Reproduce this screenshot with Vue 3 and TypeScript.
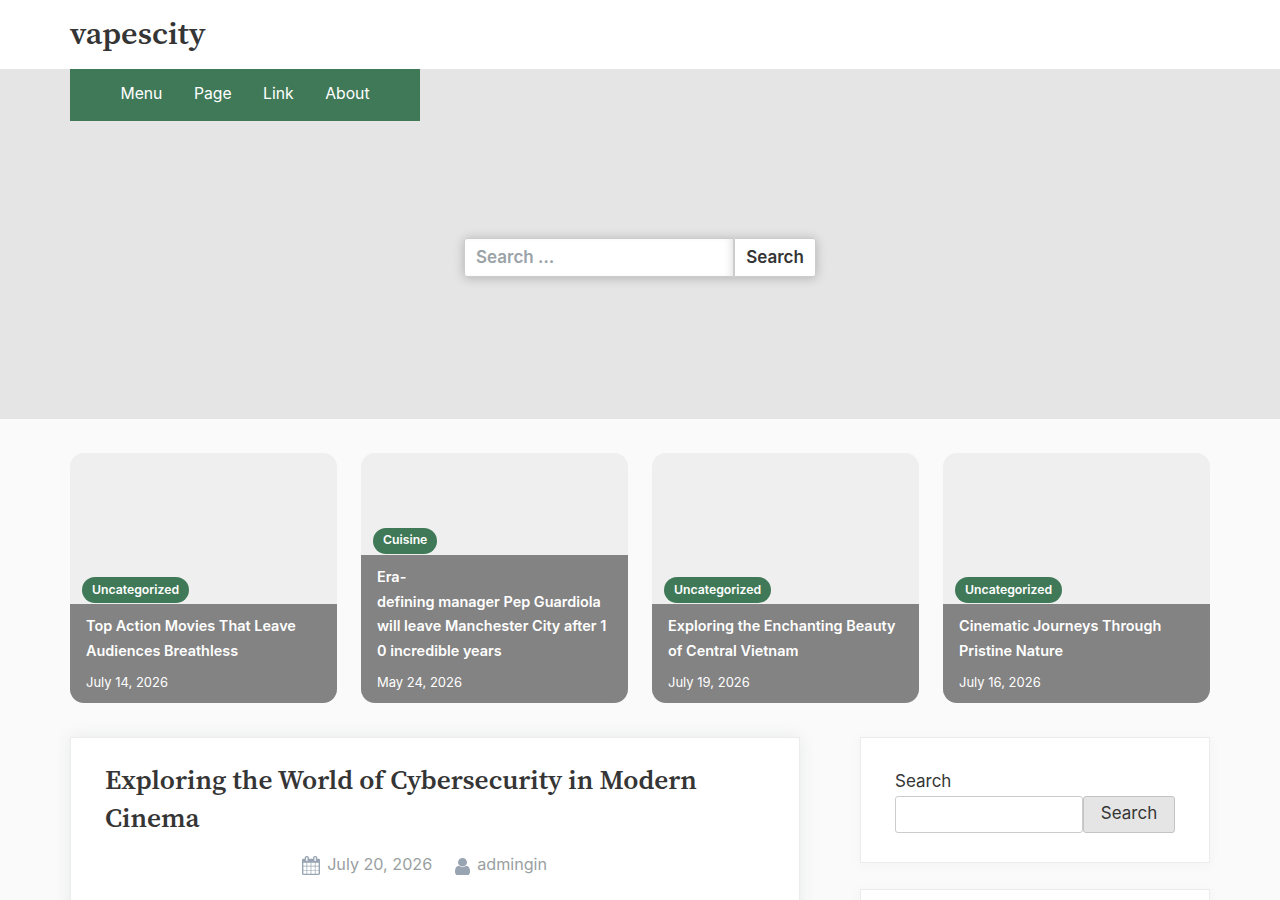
<script setup lang="ts">
interface Post {
  category: string
  lines: string[]
  date: string
}

const menu: string[] = ['Menu', 'Page', 'Link', 'About']

const posts: Post[] = [
  { category: 'Uncategorized', lines: ['Top Action Movies That Leave', 'Audiences Breathless'], date: 'July 14, 2026' },
  {
    category: 'Cuisine',
    lines: ['Era-', 'defining manager Pep Guardiola', 'will leave Manchester City after 1', '0 incredible years'],
    date: 'May 24, 2026',
  },
  { category: 'Uncategorized', lines: ['Exploring the Enchanting Beauty', 'of Central Vietnam'], date: 'July 19, 2026' },
  { category: 'Uncategorized', lines: ['Cinematic Journeys Through', 'Pristine Nature'], date: 'July 16, 2026' },
]
</script>

<template>
  <div class="page">
    <header class="site-header">
      <div class="wrap"><a class="brand">vapescity</a></div>
    </header>
    <section class="hero">
      <nav class="nav">
        <a v-for="item in menu" :key="item">{{ item }}</a>
      </nav>
      <form class="hero-search" @submit.prevent>
        <input type="text" placeholder="Search …" />
        <button type="submit">Search</button>
      </form>
    </section>

    <section class="cards">
      <article v-for="post in posts" :key="post.date" class="card">
        <span class="badge" :class="{ tall: post.lines.length > 2 }">{{ post.category }}</span>
        <div class="caption">
          <h3><span v-for="line in post.lines" :key="line">{{ line }}</span></h3>
          <time>{{ post.date }}</time>
        </div>
      </article>
    </section>

    <div class="columns">
      <main class="entry">
        <h2>Exploring the World of Cybersecurity in Modern<br />Cinema</h2>
        <div class="meta">
          <svg class="ico-cal" viewBox="64 0 1664 1792" preserveAspectRatio="none" aria-hidden="true">
            <path d="M192 1664h288v-288h-288v288zm352 0h320v-288h-320v288zm-352-352h288v-320h-288v320zm352 0h320v-320h-320v320zm-352-384h288v-288h-288v288zm736 736h320v-288h-320v288zm-384-736h320v-288h-320v288zm768 736h288v-288h-288v288zm-384-352h320v-320h-320v320zm-352-864v-288q0-13-9.5-22.5t-22.5-9.5h-64q-13 0-22.5 9.5t-9.5 22.5v288q0 13 9.5 22.5t22.5 9.5h64q13 0 22.5-9.5t9.5-22.5zm736 864h288v-320h-288v320zm-384-384h320v-288h-320v288zm384 0h288v-288h-288v288zm32-480v-288q0-13-9.5-22.5t-22.5-9.5h-64q-13 0-22.5 9.5t-9.5 22.5v288q0 13 9.5 22.5t22.5 9.5h64q13 0 22.5-9.5t9.5-22.5zm384-64v1280q0 52-38 90t-90 38h-1408q-52 0-90-38t-38-90v-1280q0-52 38-90t90-38h128v-96q0-66 47-113t113-47h64q66 0 113 47t47 113v96h384v-96q0-66 47-113t113-47h64q66 0 113 47t47 113v96h128q52 0 90 38t38 90z" />
          </svg>
          <span class="date">July 20, 2026</span>
          <svg class="ico-user" viewBox="256 128 1280 1536" preserveAspectRatio="none" aria-hidden="true">
            <path d="M1536 1399q0 109-62.5 187t-150.5 78h-854q-88 0-150.5-78t-62.5-187q0-85 8.500-160.500t31.500-152 58.500-131 94-89 134.500-34.500q131 128 313 128t313-128q76 0 134.500 34.500t94 89 58.500 131 31.500 152 8.500 160.500zm-256-887q0 159-112.500 271.500t-271.500 112.500-271.500-112.500-112.500-271.500 112.500-271.500 271.500-112.500 271.500 112.500 112.500 271.500z" />
          </svg>
          <span>admingin</span>
        </div>
      </main>
      <aside class="sidebar">
        <section class="widget">
          <label for="side-search">Search</label>
          <form class="side-form" @submit.prevent>
            <input id="side-search" type="text" />
            <button type="submit">Search</button>
          </form>
        </section>
        <section class="widget"></section>
      </aside>
    </div>
  </div>
</template>

<style>
html, body { margin: 0; overflow: hidden; }
</style>

<style scoped>
* { box-sizing: border-box; }
.page {
  height: 900px;
  overflow: hidden;
  background: #fafafa;
  color: #353535;
  font: 17px/27px Inter, sans-serif;
}
.site-header { height: 69px; background: #fff; }
.wrap { width: 1140px; margin: 0 auto; }
.brand {
  display: block;
  padding-top: 14px;
  font: 600 30px/40px "Source Serif 4", "Source Serif Pro", "Liberation Serif", serif;
  transform: scaleX(1.07);
  transform-origin: 0 0;
}
.hero { height: 350px; padding: 0 70px; background: #e5e5e5; }
.nav {
  display: flex;
  justify-content: center;
  gap: 31.5px;
  width: 350px;
  height: 52px;
  padding-top: 11px;
  background: #3f7958;
  color: #fff;
  font-size: 15.725px;
}
.hero-search {
  display: flex;
  width: 352px;
  height: 39px;
  margin: 117px auto 0;
  border-radius: 3px;
  box-shadow: 0 1px 11px rgba(0, 0, 0, 0.23);
}
input, button { margin: 0; font: inherit; color: inherit; outline: none; }
.hero-search input {
  width: 270px;
  padding: 0 11px;
  border: 1px solid #ccc;
  border-radius: 3px 0 0 3px;
  background: #fff;
  box-shadow: inset -6px 0 8px -5px rgba(0, 0, 0, 0.14);
  font-weight: 600;
}
.hero-search input::placeholder { color: #9aa3a8; opacity: 1; }
.hero-search button {
  flex: 1;
  padding: 0;
  border: 1px solid #ccc;
  border-radius: 0 3px 3px 0;
  background: #fff;
  font-weight: 600;
}
.cards {
  display: grid;
  grid-template-columns: repeat(4, 267px);
  gap: 24px;
  padding: 34px 70px 0;
}
.card {
  display: flex;
  flex-direction: column;
  align-items: flex-start;
  justify-content: flex-end;
  height: 250px;
  overflow: hidden;
  border-radius: 14px;
  background: #efefef;
}
.badge {
  height: 26px;
  margin: 0 0 1px 12px;
  padding: 0 10px;
  border-radius: 13px;
  background: #3f7958;
  color: #fff;
  font-size: 12.240px;
  font-weight: 600;
  line-height: 25.150px;
}
.badge.tall { line-height: 24.700px; }
.caption {
  width: 100%;
  padding: 10.420px 16px 10px;
  background: #838383;
  color: #fff;
}
.caption h3 { margin: 0 0 7.580px; font-size: 14.450px; font-weight: 600; line-height: 24.565px; }
.caption h3 span { display: block; white-space: nowrap; }
.caption time { display: block; font-size: 13px; line-height: 22px; }
.columns {
  display: flex;
  justify-content: space-between;
  align-items: flex-start;
  padding: 34px 70px 0;
}
.entry {
  width: 730px;
  height: 300px;
  padding: 24px 34px;
  border: 1px solid #ececec;
  background: #fff;
  box-shadow: 0 0 15px rgba(40, 70, 55, 0.09);
}
.entry h2 {
  margin: 0;
  font: 600 25.500px/38px "Source Serif 4", "Source Serif Pro", "Liberation Serif", serif;
  transform: scaleX(1.067);
  transform-origin: 0 0;
  white-space: nowrap;
}
.meta {
  display: flex;
  justify-content: center;
  align-items: center;
  height: 27px;
  margin-top: 13px;
  padding-right: 20.800px;
  color: #999fa1;
  font-size: 16.150px;
}
.meta svg { fill: #98a4b1; flex: none; }
.ico-cal { width: 18px; height: 19px; margin: 1px 7px 0 0; }
.ico-user { width: 15px; height: 17px; margin: 3px 7px 0 23px; }
.sidebar { display: grid; gap: 26px; width: 350px; }
.widget {
  height: 126px;
  padding: 30px 34px;
  border: 1px solid #ececec;
  background: #fff;
  box-shadow: 0 2px 12px rgba(40, 70, 55, 0.04);
}
.widget label { display: block; height: 28px; }
.side-form { display: flex; height: 37px; }
.side-form input { width: 188px; border: 1px solid #ccc; border-radius: 3px; background: #fff; }
.side-form button {
  width: 92px;
  padding: 0 0 3px;
  border: 1px solid #c4c4c4;
  border-radius: 3px;
  background: #e5e5e5;
}
</style>
